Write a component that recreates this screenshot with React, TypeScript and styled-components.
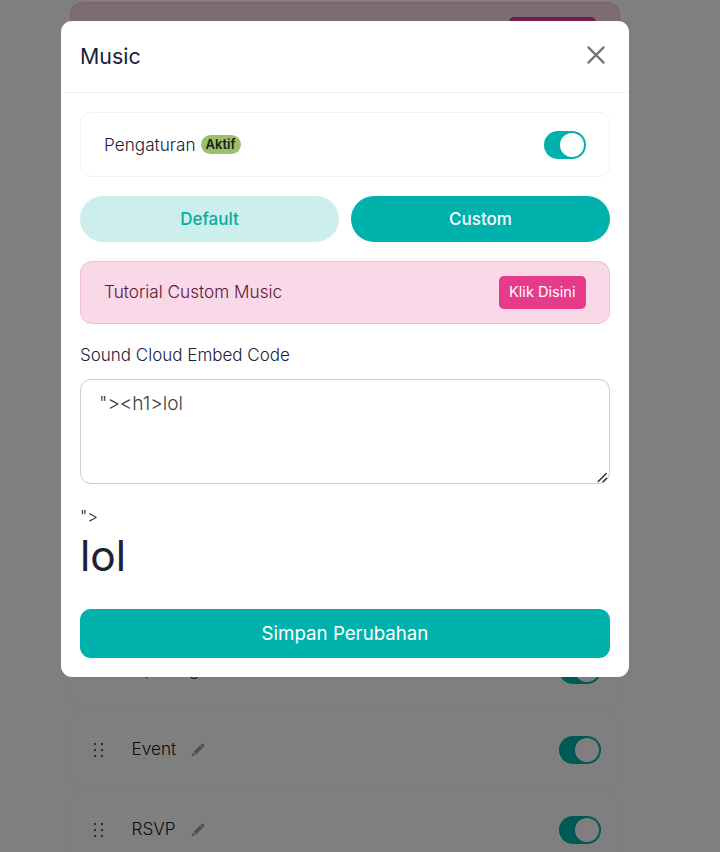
import React, { useState } from "react";
import styled, { createGlobalStyle } from "styled-components";

const Global = createGlobalStyle`
  *, *::before, *::after { box-sizing: border-box; }
  html, body { margin: 0; height: 100%; overflow: hidden; background: #fff; }
  body, button, textarea { font-family: Inter, "Liberation Sans", sans-serif; }
  h1, h2, p { margin: 0; font-weight: 400; }
  button { border: 0; padding: 0; margin: 0; cursor: pointer; }
`;

const Page = styled.main`
  width: 720px;
  height: 852px;
  overflow: hidden;
  padding: 1.5px 100px 0 70px;
  background: #fff;
  color: #1a1a2c;
`;

const Notice = styled.section`
  display: flex;
  align-items: center;
  justify-content: space-between;
  height: 63px;
  padding: 0 23px 0 24px;
  border: 1px solid #f3bcd6;
  border-radius: 12px;
  background: #f9d8e7;
  color: #5c1738;
  font-size: 17.2px;
  font-weight: 300;
`;

const NoticeText = styled.span`
  margin: 0 0 2px -1px;
`;

const PinkButton = styled.button`
  width: 87.5px;
  height: 33px;
  border-radius: 5px;
  background: #e63a8b;
  color: #fff;
  font-size: 14.6px;
  font-weight: 400;
`;

const SectionList = styled.ul`
  display: grid;
  gap: 10px;
  margin: 570.5px 0 0;
  padding: 0;
  list-style: none;
`;

const SectionRow = styled.li`
  display: flex;
  align-items: center;
  height: 70px;
  padding: 0 19px 0 23px;
  border-radius: 10px;
  background: #fff;
  box-shadow: 0 1px 4px rgba(0, 0, 0, 0.06);
`;

const SectionName = styled.span`
  margin: 0 15px 3px 27.5px;
  font-size: 17.2px;
  font-weight: 300;
`;

const PushRight = styled.div`
  display: flex;
  margin-left: auto;
`;

const Track = styled.button<{ $on: boolean }>`
  display: flex;
  align-items: center;
  justify-content: ${(p) => (p.$on ? "flex-end" : "flex-start")};
  width: 42.5px;
  height: 28px;
  padding: 0 2px;
  border-radius: 14px;
  background: ${(p) => (p.$on ? "#00b2ab" : "#cbd5e1")};
`;

const Knob = styled.span`
  width: 24px;
  height: 24px;
  border-radius: 50%;
  background: #fff;
`;

const Backdrop = styled.div`
  position: fixed;
  inset: 0;
  width: 720px;
  height: 852px;
  padding: 20.5px 91px 0 61px;
  background: rgba(0, 0, 0, 0.5);
`;

const Dialog = styled.div`
  height: 656px;
  border-radius: 11px;
  background: #fff;
  color: #1a2238;
`;

const DialogHeader = styled.header`
  display: flex;
  align-items: center;
  justify-content: space-between;
  height: 72px;
  padding: 0 23px 2px 19px;
  border-bottom: 1px solid #f0f1f2;
`;

const Title = styled.h2`
  padding-top: 1px;
  font-size: 21.4px;
  line-height: 28px;
`;

const CloseButton = styled.button`
  display: flex;
  padding-bottom: 1px;
  background: none;
`;

const DialogBody = styled.div`
  padding: 19px;
`;

const SettingRow = styled.div`
  display: flex;
  align-items: center;
  height: 65px;
  padding: 1px 23px 0;
  border: 1px solid #f1f2f3;
  border-radius: 11px;
`;

const SettingLabel = styled.span`
  margin: 0 5px 1px 0;
  font-size: 17.2px;
  font-weight: 300;
`;

const Badge = styled.span`
  width: 40px;
  height: 19px;
  border-radius: 10px;
  background: #9cc069;
  color: #15201c;
  font-size: 13px;
  font-weight: 600;
  line-height: 19px;
  text-align: center;
`;

const Tabs = styled.div`
  display: grid;
  grid-template-columns: 1fr 1fr;
  gap: 12px;
  margin: 19px 0;
`;

const Tab = styled.button<{ $active: boolean }>`
  height: 46px;
  border-radius: 23px;
  background: ${(p) => (p.$active ? "#00b2ab" : "#ccefed")};
  color: ${(p) => (p.$active ? "#fff" : "#0daaa2")};
  font-size: 17px;
  font-weight: 500;
`;

const FieldLabel = styled.label`
  display: block;
  margin: 20.5px 0 12.5px;
  font-size: 17px;
  font-weight: 300;
  line-height: 22px;
`;

const CodeField = styled.textarea`
  display: block;
  width: 100%;
  height: 105px;
  padding: 10px 18px;
  border: 1px solid #cbcecf;
  border-radius: 11px;
  outline: 0;
  background: #fff;
  color: #3a3e44;
  font-size: 19.1px;
  font-weight: 300;
  line-height: 27px;
  resize: none;
`;

const FieldFrame = styled.div`
  position: relative;
`;

const ResizeMark = styled.svg`
  position: absolute;
  right: 2px;
  bottom: 1px;
`;

const Leftover = styled.p`
  margin-top: 20px;
  font-size: 16.5px;
  font-weight: 300;
  line-height: 24px;
`;

const Embedded = styled.h1`
  padding-top: 2px;
  font-size: 42.5px;
  line-height: 52px;
`;

const SaveButton = styled.button`
  width: 100%;
  height: 49px;
  margin-top: 27px;
  border-radius: 11px;
  background: #00b2ab;
  color: #fff;
  font-size: 18.7px;
  font-weight: 400;
`;

function Switch({ label }: { label: string }) {
  const [on, setOn] = useState(true);
  return (
    <Track type="button" role="switch" aria-label={label} aria-checked={on} $on={on} onClick={() => setOn(!on)}>
      <Knob />
    </Track>
  );
}

function Grip() {
  return (
    <svg width="11" height="16" viewBox="0 0 11 16" fill="#38383e">
      {[2, 8, 14].map((y) => (
        <React.Fragment key={y}>
          <circle cx="2" cy={y} r="1.1" />
          <circle cx="9" cy={y} r="1.1" />
        </React.Fragment>
      ))}
    </svg>
  );
}

function Pencil() {
  return (
    <svg width="14" height="14" viewBox="0 0 14 14" fill="#a0a0a0">
      <path d="M10.6.7a1.1 1.1 0 0 1 1.5 0l1.2 1.2a1.1 1.1 0 0 1 0 1.5L12 4.7 9.3 2z" />
      <path d="M8.9 2.4 11.6 5.1 5.2 11.5 2.5 8.8zM1.8 9.6l2.6 2.6L.3 13.6z" />
    </svg>
  );
}

const sections = ["Opening", "Event", "RSVP"];
const tabs = ["Default", "Custom"];

export default function App() {
  const [tab, setTab] = useState("Custom");
  return (
    <>
      <Global />
      <Page>
        <Notice>
          <NoticeText>Tutorial</NoticeText>
          <PinkButton type="button">Klik Disini</PinkButton>
        </Notice>
        <SectionList>
          {sections.map((name) => (
            <SectionRow key={name}>
              <Grip />
              <SectionName>{name}</SectionName>
              <Pencil />
              <PushRight>
                <Switch label={name} />
              </PushRight>
            </SectionRow>
          ))}
        </SectionList>
      </Page>
      <Backdrop>
        <Dialog role="dialog" aria-label="Music">
          <DialogHeader>
            <Title>Music</Title>
            <CloseButton type="button" aria-label="Tutup">
              <svg width="20" height="20" viewBox="0 0 20 20" stroke="#737373" strokeWidth="2.2" strokeLinecap="round">
                <path d="M2.4 2.4 17.6 17.6M17.6 2.4 2.4 17.6" />
              </svg>
            </CloseButton>
          </DialogHeader>
          <DialogBody>
            <SettingRow>
              <SettingLabel>Pengaturan</SettingLabel>
              <Badge>Aktif</Badge>
              <PushRight>
                <Switch label="Pengaturan" />
              </PushRight>
            </SettingRow>
            <Tabs>
              {tabs.map((name) => (
                <Tab key={name} type="button" $active={tab === name} onClick={() => setTab(name)}>
                  {name}
                </Tab>
              ))}
            </Tabs>
            <Notice>
              <NoticeText>Tutorial Custom Music</NoticeText>
              <PinkButton type="button">Klik Disini</PinkButton>
            </Notice>
            <FieldLabel htmlFor="embed">Sound Cloud Embed Code</FieldLabel>
            <FieldFrame>
              <CodeField id="embed" spellCheck={false} defaultValue={'"><h1>lol'} />
              <ResizeMark width="11" height="11" viewBox="0 0 11 11" stroke="#2c2c2c" strokeWidth="1.4" strokeLinecap="round">
                <path d="M1.2 9.5 9.2 1.5M6 9.8 9.6 6.2" />
              </ResizeMark>
            </FieldFrame>
            <Leftover>{'">'}</Leftover>
            <Embedded>lol</Embedded>
            <SaveButton type="button">Simpan Perubahan</SaveButton>
          </DialogBody>
        </Dialog>
      </Backdrop>
    </>
  );
}
